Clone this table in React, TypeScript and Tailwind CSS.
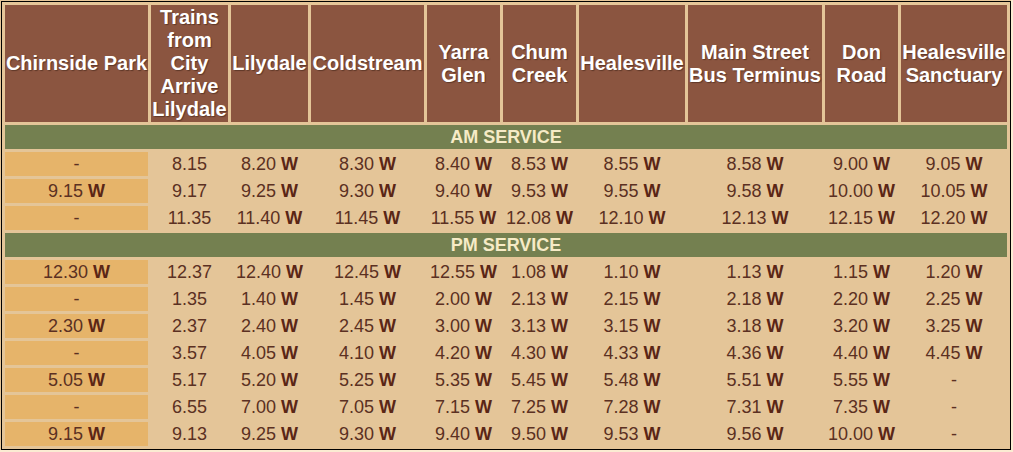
import React from "react";

const am: string[][] = [
  ["-", "8.15", "8.20 W", "8.30 W", "8.40 W", "8.53 W", "8.55 W", "8.58 W", "9.00 W", "9.05 W"],
  ["9.15 W", "9.17", "9.25 W", "9.30 W", "9.40 W", "9.53 W", "9.55 W", "9.58 W", "10.00 W", "10.05 W"],
  ["-", "11.35", "11.40 W", "11.45 W", "11.55 W", "12.08 W", "12.10 W", "12.13 W", "12.15 W", "12.20 W"],
];

const pm: string[][] = [
  ["12.30 W", "12.37", "12.40 W", "12.45 W", "12.55 W", "1.08 W", "1.10 W", "1.13 W", "1.15 W", "1.20 W"],
  ["-", "1.35", "1.40 W", "1.45 W", "2.00 W", "2.13 W", "2.15 W", "2.18 W", "2.20 W", "2.25 W"],
  ["2.30 W", "2.37", "2.40 W", "2.45 W", "3.00 W", "3.13 W", "3.15 W", "3.18 W", "3.20 W", "3.25 W"],
  ["-", "3.57", "4.05 W", "4.10 W", "4.20 W", "4.30 W", "4.33 W", "4.36 W", "4.40 W", "4.45 W"],
  ["5.05 W", "5.17", "5.20 W", "5.25 W", "5.35 W", "5.45 W", "5.48 W", "5.51 W", "5.55 W", "-"],
  ["-", "6.55", "7.00 W", "7.05 W", "7.15 W", "7.25 W", "7.28 W", "7.31 W", "7.35 W", "-"],
  ["9.15 W", "9.13", "9.25 W", "9.30 W", "9.40 W", "9.50 W", "9.53 W", "9.56 W", "10.00 W", "-"],
];

const headers: string[][] = [
  ["Chirnside Park"],
  ["Trains", "from", "City", "Arrive", "Lilydale"],
  ["Lilydale"],
  ["Coldstream"],
  ["Yarra", "Glen"],
  ["Chum", "Creek"],
  ["Healesville"],
  ["Main Street", "Bus Terminus"],
  ["Don", "Road"],
  ["Healesville", "Sanctuary"],
];

function Cell({ v }: { v: string }) {
  if (v.endsWith(" W")) {
    return (
      <>
        {v.slice(0, -2)} <b className="font-bold text-[#5a2616]">W</b>
      </>
    );
  }
  return <>{v}</>;
}

function Rows({ rows }: { rows: string[][] }) {
  return (
    <>
      {rows.map((r, i) => (
        <tr key={i}>
          {r.map((v, j) => (
            <td
              key={j}
              className={
                j === 0
                  ? "h-[24px] p-0 text-center align-middle whitespace-nowrap leading-[24px] bg-[#e6b46a]"
                  : "h-[24px] p-0 text-center align-middle whitespace-nowrap leading-[24px]"
              }
            >
              <Cell v={v} />
            </td>
          ))}
        </tr>
      ))}
    </>
  );
}

function Section({ label }: { label: string }) {
  return (
    <tr>
      <td
        colSpan={10}
        className="h-[24px] p-0 text-center align-middle leading-[24px] bg-[#748050] text-[#f6ebc6] font-bold text-[18px]"
      >
        {label}
      </td>
    </tr>
  );
}

export default function App() {
  return (
    <div className="min-h-screen bg-[#fbecd3]" style={{ fontFamily: '"Liberation Sans", Arial, sans-serif' }}>
      <div className="inline-block border-l border-t border-[#e4c598]">
        <table className="table-fixed w-[1010px] border border-black border-separate border-spacing-[3px] bg-[#e4c598] text-[18px] text-[#5b3022]">
          <colgroup>
            <col className="w-[143px]" />
            <col className="w-[77px]" />
            <col className="w-[77px]" />
            <col className="w-[113px]" />
            <col className="w-[73px]" />
            <col className="w-[73px]" />
            <col className="w-[106px]" />
            <col className="w-[134px]" />
            <col className="w-[73px]" />
            <col className="w-[106px]" />
          </colgroup>
          <thead>
            <tr>
              {headers.map((h, i) => (
                <th
                  key={i}
                  className="h-[117px] p-0 bg-[#8b5540] text-white font-bold text-[20px] leading-[23px] text-center align-middle whitespace-nowrap [text-shadow:1px_1px_1px_rgba(40,20,10,0.45)]"
                >
                  {h.map((line, k) => (
                    <React.Fragment key={k}>
                      {k > 0 && <br />}
                      {line}
                    </React.Fragment>
                  ))}
                </th>
              ))}
            </tr>
          </thead>
          <tbody>
            <Section label="AM SERVICE" />
            <Rows rows={am} />
            <Section label="PM SERVICE" />
            <Rows rows={pm} />
          </tbody>
        </table>
      </div>
    </div>
  );
}
